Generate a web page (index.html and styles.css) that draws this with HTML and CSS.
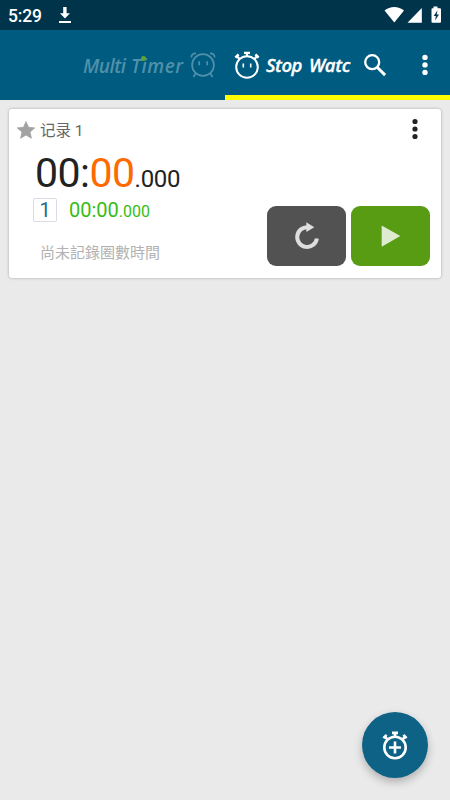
FILE: index.html
```html
<!DOCTYPE html>
<html lang="zh">
<head>
<meta charset="utf-8">
<title>Stop Watch</title>
<link rel="stylesheet" href="styles.css">
</head>
<body>
<header class="status">
  <span class="clock">5:29</span>
  <svg class="download" width="14" height="18" viewBox="0 0 14 18"><path d="M5.200 1h3.400v6.200H12L7 12.400 1.900 7.200h3.300zM1 15h12v2H1z" fill="#fff"/></svg>
  <svg class="signals" width="58" height="18" viewBox="0 0 58 18" fill="#fff">
    <path d="M.5 4.500C6-.2 14.500-.2 20 4.500L10.300 16.500z"/>
    <path d="M37.800 2v14.700H23.500z"/>
    <path fill-rule="evenodd" d="M49.500.5h4v1.800H56q1 0 1 1v12.400q0 1-1 1h-7.500q-1 0-1-1V3.300q0-1 1-1h1zM53.500 4.200L49.700 10h2.200l-.9 4.500 4-6h-2.300z"/>
  </svg>
</header>
<nav class="appbar">
  <div class="tab tab-timer">
    <span class="brand brand-multi">Multi</span><span class="brand brand-timer">Timer<i class="dot"></i></span>
    <svg class="alarm" width="26" height="26" viewBox="0 0 26 26" fill="none" stroke="#4f90aa" stroke-width="1.700"><circle cx="13" cy="13" r="10.900"/><path d="M1.300 5.500C1.500 3 3.500 1.300 6 1.400M24.700 5.500C24.500 3 22.500 1.300 20 1.400M5.500 21.500L3.500 25M20.500 21.500l2 3.500M9.200 9.200v4M17.200 9.200v4"/></svg>
  </div>
  <div class="tab tab-watch">
    <svg class="stopwatch" width="26" height="28" viewBox="0 0 26 28" fill="none" stroke="#fff" stroke-width="2"><circle cx="13" cy="16" r="10.800"/><path d="M13 5V2M10 1.900h6M5.600 8L3 5.400M20.400 8L23 5.400" stroke-width="2.200"/><path d="M1.400 6.600l3.200-3.200M24.600 6.600l-3.200-3.200" stroke-width="2.600"/><path d="M9.300 12.500v4M16.700 12.500v4" stroke-width="1.600"/></svg>
    <span class="brand brand-stop">Stop</span><span class="brand brand-watc">Watc</span>
    <svg class="search" width="24" height="24" viewBox="0 0 24 24" fill="none" stroke="#fff" stroke-width="2.300"><circle cx="9.200" cy="9.200" r="7"/><path d="M14.200 14.200l7.900 7.900" stroke-width="2.900"/></svg>
    <svg class="more" width="6" height="22" viewBox="0 0 6 22" fill="#fff"><circle cx="3" cy="3.400" r="2.700"/><circle cx="3" cy="10.900" r="2.700"/><circle cx="3" cy="18.400" r="2.700"/></svg>
  </div>
</nav>
<main>
  <section class="card">
    <div class="card-head">
      <svg width="18" height="18" viewBox="0 0 18 18"><path d="M9 .6l2.500 5.700 6.200.6-4.700 4.100 1.400 6.200L9 14l-5.400 3.200L5 11 .3 6.900l6.200-.6z" fill="#a2a2a2" stroke="#a2a2a2" stroke-width=".8"/></svg>
      <span class="name">记录 1</span>
      <svg class="card-more" width="6" height="22" viewBox="0 0 6 22" fill="#222"><circle cx="3" cy="3.500" r="2.600"/><circle cx="3" cy="11" r="2.600"/><circle cx="3" cy="18.500" r="2.600"/></svg>
    </div>
    <div class="time">00:<span class="sec">00</span><span class="ms">.000</span></div>
    <div class="card-foot">
      <div class="laps">
        <div class="lap"><span class="lap-no">1</span><span class="lap-time">00:00<small>.000</small></span></div>
        <p class="empty">尚未記錄圈數時間</p>
      </div>
      <div class="actions">
        <button class="btn reset" aria-label="重設"><svg width="26" height="28" viewBox="0 0 26 28"><path d="M14 5.200A9.900 9.900 0 1 0 22.900 16.500" fill="none" stroke="#dedede" stroke-width="4"/><path d="M12.300.3l8 4.900-8 4.700z" fill="#dedede"/></svg></button>
        <button class="btn start" aria-label="開始"><svg width="20" height="22" viewBox="0 0 20 22"><path d="M.7.5L19.300 11 .7 21.700z" fill="#deebd1"/></svg></button>
      </div>
    </div>
  </section>
</main>
<button class="fab" aria-label="新增">
  <svg width="26" height="29" viewBox="0 0 26 29" fill="none" stroke="#fff" stroke-width="2.600"><circle cx="13" cy="16.500" r="10.700"/><path d="M13 6V2M10 1.900h6M5.600 8.500L3 5.900M20.400 8.500L23 5.900M1.400 7.100L4.600 3.900M24.600 7.100l-3.200-3.200M13 10.500v12M7 16.500h12"/></svg>
</button>
</body>
</html>
```

FILE: styles.css
```css
* { box-sizing: border-box; }
body {
  margin: 0;
  height: 800px;
  overflow: hidden;
  background: #eaeaea;
  font-family: Roboto, "Noto Sans CJK SC", sans-serif;
}
svg { display: block; flex: none; }
button { border: 0; padding: 0; display: flex; align-items: center; justify-content: center; }
.status {
  height: 30px;
  display: flex;
  align-items: center;
  padding: 0 8px;
  background: #00344b;
  color: #fff;
}
.clock { width: 50px; font-size: 17.500px; font-weight: 500; line-height: 30px; padding-top: 2px; letter-spacing: -0.200px; }
.signals { margin-left: auto; }
.appbar {
  height: 70px;
  display: flex;
  background: #005b80;
}
.tab { width: 225px; height: 70px; display: flex; align-items: center; }
.brand {
  font-family: "Open Sans", sans-serif;
  font-style: italic;
  font-weight: 600;
  white-space: nowrap;
  line-height: 24px;
}
.tab-timer { padding-left: 83px; color: #4f90aa; font-size: 19px; }
.tab-timer .brand { margin-top: 2px; }
.brand-multi { width: 48px; letter-spacing: -0.500px; }
.brand-timer { position: relative; width: 59px; letter-spacing: 0.600px; }
.dot {
  position: absolute;
  left: 10px;
  top: 2px;
  width: 5px;
  height: 5px;
  border-radius: 50%;
  background: #5fa52b;
}
.tab-watch {
  border-bottom: 5px solid #ff0;
  padding: 0 0 0 9px;
  color: #fff;
  font-size: 18.500px;
}
.tab-watch .brand { margin-top: 5px; }
.stopwatch { margin-top: 4px; }
.brand-stop { margin-left: 6px; width: 43px; letter-spacing: -0.500px; -webkit-text-stroke: .3px #fff; }
.brand-watc { width: 42px; letter-spacing: -0.300px; overflow: hidden; -webkit-text-stroke: .3px #fff; }
.search { margin: 4px 0 0 12px; }
.more { margin: 4px 0 0 35px; }
.card {
  margin: 9px 9px 0;
  height: 169px;
  background: #fff;
  border-radius: 3px;
  box-shadow: 0 0 3px rgba(0, 0, 0, .3);
}
.card-head { height: 42px; padding: 0 23px 0 8px; display: flex; align-items: center; }
.name { margin: -2px 0 0 5px; font-size: 15.500px; color: #666; }
.card-more { margin: -2px 0 0 auto; }
.time {
  height: 46px;
  padding-left: 26px;
  font-size: 41px;
  line-height: 45px;
  letter-spacing: -0.500px;
  color: #222;
}
.sec { color: #ff6a00; }
.ms { font-size: 24px; letter-spacing: -0.300px; }
.card-foot { display: flex; justify-content: space-between; }
.laps { padding: 1px 0 0 24px; }
.lap { display: flex; align-items: center; height: 24px; }
.lap-no {
  width: 24px;
  height: 24px;
  border: 1px solid #d9dce2;
  border-radius: 2px;
  text-align: center;
  line-height: 23px;
  font-size: 20px;
  color: #1c6c8f;
}
.lap-time { margin: 2px 0 0 12px; font-size: 20px; line-height: 24px; color: #35bd15; }
.lap-time small { font-size: 16px; }
.empty { margin: 20px 0 0 7px; font-size: 15px; line-height: 22px; color: #b2b2b2; }
.actions { display: flex; gap: 5px; padding: 9px 11px 0 0; }
.btn { width: 79px; height: 60px; border-radius: 9px; }
.reset { background: #525252; }
.start { background: #589c14; }
.fab {
  position: absolute;
  left: 362px;
  top: 712px;
  width: 66px;
  height: 66px;
  border-radius: 50%;
  background: #0d6286;
  box-shadow: 0 4px 9px rgba(0, 0, 0, .25);
}
```
